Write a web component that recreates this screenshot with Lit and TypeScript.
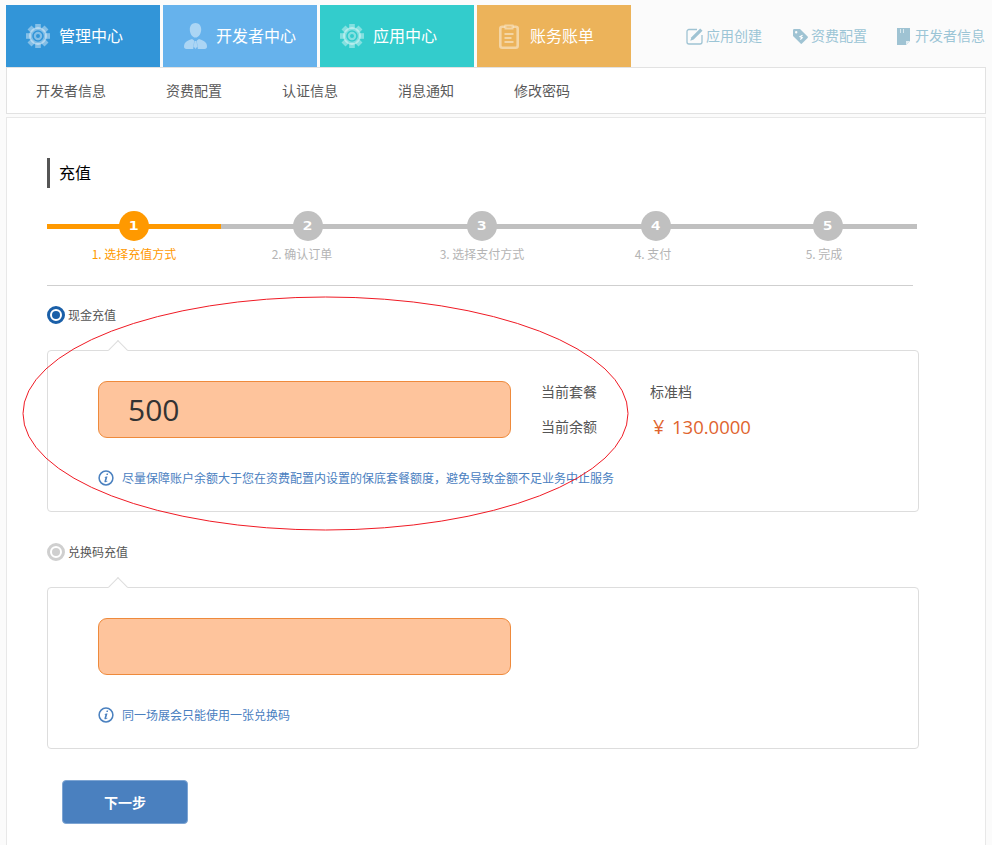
import { LitElement, html, css, svg } from "lit";
import { customElement } from "lit/decorators.js";

const gear = () => html`
  <svg class="tab-icon" width="24" height="24" viewBox="-12 -12 24 24">
    ${[0, 45, 90, 135, 180, 225, 270, 315].map(
      (a) => svg`<rect x="-2.8" y="-12" width="5.6" height="5" transform="rotate(${a})" fill="#fff" fill-opacity=".4" />`
    )}
    <path
      fill="#fff"
      fill-opacity=".4"
      fill-rule="evenodd"
      d="M-9 0a9 9 0 1 0 18 0a9 9 0 1 0-18 0zM-5.800 0a5.800 5.800 0 1 0 11.600 0a5.800 5.800 0 1 0-11.600 0zM-4.200 0a4.200 4.200 0 1 0 8.400 0a4.200 4.200 0 1 0-8.400 0zM-2 0a2 2 0 1 0 4 0a2 2 0 1 0-4 0z"
    />
  </svg>
`;

const person = html`
  <svg class="tab-icon" width="23" height="27" viewBox="0 0 23 27">
    <g fill="#fff" fill-opacity=".45">
      <path d="M11.500 0c3.600 0 5.700 2.800 5.700 6.400 0 3.600-2.200 8.100-5.700 8.100s-5.700-4.500-5.700-8.100C5.800 2.800 7.900 0 11.500 0z" />
      <path d="M8 16l2.200 1.500-1 8.500H2.500C.8 26 0 25 0 23.500c0-3.500 2-5.500 8-7.500z" />
      <path d="M15 16l-2.200 1.500 1 8.500h6.700c1.700 0 2.500-1 2.500-2.500 0-3.500-2-5.500-8-7.500z" />
      <path d="M10.500 18h2l.8 5.500-1.800 2.500-1.800-2.500z" />
    </g>
  </svg>
`;

const clipboard = html`
  <svg class="tab-icon" width="20" height="26" viewBox="0 0 20 26">
    <g fill="none" stroke="#fff" stroke-opacity=".45" stroke-width="2.600">
      <path d="M6 3.800H3.300a2 2 0 0 0-2 2V22.700a2 2 0 0 0 2 2h13.400a2 2 0 0 0 2-2V5.800a2 2 0 0 0-2-2H14" />
      <path d="M6.500 5.500V2.500h7v3z" stroke-width="2" />
      <path d="M5.500 11h9M5.500 15h7M5.500 19h9" stroke-width="2" />
    </g>
  </svg>
`;

const pencil = html`
  <svg width="17" height="17" viewBox="0 0 17 17">
    <path d="M11 1.500H3A2 2 0 0 0 1 3.500v10.500a2 2 0 0 0 2 2h11a2 2 0 0 0 2-2V7" fill="none" stroke="#9fc3d3" stroke-width="1.300" />
    <path d="M14.200.5l2.300 2.300-8.800 8.800-3.400 1.100 1.100-3.400z" fill="#9fc3d3" />
  </svg>
`;

const tag = html`
  <svg width="15" height="15" viewBox="0 0 15 15">
    <path fill-rule="evenodd" fill="#9fc3d3" d="M0 1.200A1.200 1.200 0 0 1 1.200 0H7l7.600 7.600a1 1 0 0 1 0 1.400l-5.600 5.600a1 1 0 0 1-1.400 0L0 7zM3.200 2a1.200 1.200 0 1 0 0 2.400 1.200 1.200 0 0 0 0-2.400z" />
    <path d="M9.500 6.200L7 7.700l2.300 1-2 1.800" fill="none" stroke="#fff" stroke-width="1.100" />
  </svg>
`;

const book = html`
  <svg width="13" height="17" viewBox="0 0 13 17">
    <path d="M0 0h13v13l-4 4H0z" fill="#9fc3d3" />
    <path d="M9 17v-4h4z" fill="#e2eef3" />
    <path d="M3 1v4h1V1zM6 1v4h1V1z" fill="#d8e8ee" />
  </svg>
`;

const info = html`
  <svg class="info-icon" width="16" height="16" viewBox="0 0 16 16">
    <circle cx="8" cy="8" r="6.900" fill="none" stroke="#4a80bf" stroke-width="1.500" />
    <path d="M8.700 3.600h1.500l-.4 1.500H8.300zM7.800 6.400h1.700l-1.300 4.500c-.1.400.3.500 1.100-.1l.2.400c-1 .9-1.700 1.200-2.400 1.100-.7-.1-.8-.6-.6-1.300l.9-3.300-.8.200.1-.4z" fill="#4a80bf" />
  </svg>
`;

const tabs = [
  { label: "管理中心", color: "#3295d8", icon: gear() },
  { label: "开发者中心", color: "#66b2ec", icon: person },
  { label: "应用中心", color: "#33cccc", icon: gear() },
  { label: "账务账单", color: "#ecb35a", icon: clipboard },
];

const links = [
  { label: "应用创建", icon: pencil },
  { label: "资费配置", icon: tag },
  { label: "开发者信息", icon: book },
];

const subnav = ["开发者信息", "资费配置", "认证信息", "消息通知", "修改密码"];

// labelNudge: the reference labels sit a few px left of their circle
const steps = [
  { label: "选择充值方式", labelNudge: 0, circleNudge: 0 },
  { label: "确认订单", labelNudge: 6, circleNudge: 0 },
  { label: "选择支付方式", labelNudge: 0, circleNudge: 0 },
  { label: "支付", labelNudge: 3, circleNudge: 0 },
  { label: "完成", labelNudge: 6, circleNudge: 2 },
];

@customElement("app-root")
export class AppRoot extends LitElement {
  static styles = css`
    :host {
      display: block;
      position: relative;
      height: 845px;
      overflow: hidden;
      background: #fbfbfb;
      font-family: "Noto Sans CJK SC", "Liberation Sans", sans-serif;
      color: #555;
    }
    .topbar {
      display: flex;
      justify-content: space-between;
      align-items: center;
      margin: 0 6px;
      padding-top: 5px;
    }
    .tabs {
      display: flex;
      gap: 3px;
    }
    .tab {
      width: 154px;
      height: 62px;
      box-sizing: border-box;
      padding-left: 20px;
      display: flex;
      align-items: center;
      gap: 9px;
      color: #fff;
      font-size: 16px;
    }
    .tab:nth-child(2) {
      padding-left: 21px;
    }
    .tab:nth-child(4) {
      padding-left: 22px;
      gap: 11px;
    }
    .tab span,
    .links span,
    .subnav span,
    .radio span.text,
    .note span,
    .facts span {
      margin-top: -2px;
    }
    .links {
      display: flex;
      margin-right: 1px;
      color: #9cc5d6;
      font-size: 14px;
    }
    .links a {
      display: flex;
      align-items: center;
      gap: 3px;
      margin-left: 31px;
    }
    .links a:last-child {
      gap: 5px;
      margin-left: 30px;
    }
    .subnav {
      margin: 0 6px;
      height: 47px;
      box-sizing: border-box;
      border: 1px solid #e2e2e2;
      background: #fff;
      padding-left: 29px;
      display: flex;
      align-items: center;
      gap: 60px;
      font-size: 14px;
      color: #5a5a5a;
    }
    .main {
      margin: 3px 6px 0;
      border: 1px solid #e8e8e8;
      background: #fff;
      padding: 40px 0 60px 40px;
    }
    .title {
      height: 30px;
      line-height: 28px;
      border-left: 3px solid #555;
      padding-left: 9px;
      font-size: 16px;
      color: #000;
    }
    .steps {
      display: flex;
      width: 870px;
      margin-top: 23px;
    }
    .step {
      width: 174px;
      text-align: center;
      font-size: 12px;
      color: #b4b4b4;
    }
    .rail {
      height: 30px;
      display: flex;
      justify-content: center;
      background: linear-gradient(#c0c0c0, #c0c0c0) 0 13px / 100% 5px no-repeat;
    }
    .num {
      width: 30px;
      height: 30px;
      border-radius: 50%;
      background: #c0c0c0;
      color: #fff;
      font: bold 12px/30px "DejaVu Sans Mono", monospace;
    }
    .num span {
      display: inline-block;
      transform: scale(1.35, 1);
    }
    .step.on {
      color: #ff9900;
    }
    .step.on .rail {
      background-image: linear-gradient(#ff9900, #ff9900);
    }
    .step.on .num {
      background: #ff9900;
    }
    .step-label {
      margin-top: 4px;
      line-height: 17px;
    }
    .rule {
      width: 866px;
      height: 1px;
      background: #cfcfcf;
      margin-top: 23px;
    }
    .radio {
      display: flex;
      align-items: center;
      gap: 3px;
      height: 18px;
      margin-top: 20px;
      font-size: 12px;
      color: #555;
    }
    .radio.second {
      margin-top: 31px;
    }
    .dot {
      width: 18px;
      height: 18px;
      box-sizing: border-box;
      border-radius: 50%;
      border: 3px solid #1a5fa8;
      display: flex;
      align-items: center;
      justify-content: center;
    }
    .dot::after {
      content: "";
      width: 8px;
      height: 8px;
      border-radius: 50%;
      background: #1a5fa8;
    }
    .radio.second .dot {
      border-color: #cfcfcf;
    }
    .radio.second .dot::after {
      background: #cfcfcf;
    }
    .panel {
      position: relative;
      width: 872px;
      height: 162px;
      box-sizing: border-box;
      margin-top: 26px;
      border: 1px solid #dddddd;
      border-radius: 4px;
      background: #fff;
      padding: 30px 0 0 50px;
    }
    .panel::before {
      content: "";
      position: absolute;
      left: 63px;
      top: -8px;
      width: 14px;
      height: 14px;
      box-sizing: border-box;
      background: #fff;
      border-top: 1px solid #dddddd;
      border-left: 1px solid #dddddd;
      transform: rotate(45deg);
    }
    .row {
      display: flex;
      align-items: center;
      gap: 30px;
      height: 57px;
    }
    .amount {
      width: 413px;
      height: 57px;
      box-sizing: border-box;
      border: 1px solid #ee8a3c;
      border-radius: 9px;
      background: #fec49c;
      padding-left: 29px;
      font: 30px/55px "Open Sans", sans-serif;
      color: #333;
    }
    .facts {
      display: grid;
      grid-template-columns: 109px auto;
      grid-auto-rows: 35px;
      align-items: center;
      font-size: 14px;
      color: #555;
    }
    .balance {
      display: flex;
      align-items: center;
      margin-left: 3px;
      font: 18.5px "Open Sans", "Noto Sans CJK SC", sans-serif;
      color: #e0642e;
    }
    .balance b {
      width: 19px;
      font-weight: normal;
      font-size: 20px;
    }
    .note {
      display: flex;
      align-items: center;
      gap: 8px;
      margin-top: 32px;
      height: 16px;
      font-size: 12px;
      color: #4a80bf;
    }
    .next {
      width: 126px;
      height: 44px;
      margin: 31px 0 0 15px;
      display: block;
      border: 1px solid #7ea5d3;
      border-radius: 4px;
      background: #4a80bf;
      color: #fff;
      font: bold 14px "Noto Sans CJK SC", sans-serif;
    }
    .ellipse {
      position: absolute;
      left: 22px;
      top: 296px;
      pointer-events: none;
    }
  `;

  render() {
    return html`
      <div class="topbar">
        <div class="tabs">
          ${tabs.map(
            (t) => html`
              <div class="tab" style="background:${t.color}">${t.icon}<span>${t.label}</span></div>
            `
          )}
        </div>
        <div class="links">
          ${links.map((l) => html`<a>${l.icon}<span>${l.label}</span></a>`)}
        </div>
      </div>
      <nav class="subnav">${subnav.map((s) => html`<span>${s}</span>`)}</nav>
      <section class="main">
        <div class="title">充值</div>
        <div class="steps">
          ${steps.map(
            (s, i) => html`
              <div class="step ${i === 0 ? "on" : ""}">
                <div class="rail">
                  <div class="num" style="margin-right:${s.circleNudge * 2}px"><span>${i + 1}</span></div>
                </div>
                <div class="step-label" style="padding-right:${s.labelNudge * 2}px">${i + 1}. ${s.label}</div>
              </div>
            `
          )}
        </div>
        <div class="rule"></div>

        <div class="radio"><span class="dot"></span><span class="text">现金充值</span></div>
        <div class="panel">
          <div class="row">
            <div class="amount">500</div>
            <div class="facts">
              <span>当前套餐</span><span>标准档</span>
              <span>当前余额</span><span class="balance"><b>¥</b>130.0000</span>
            </div>
          </div>
          <div class="note">${info}<span>尽量保障账户余额大于您在资费配置内设置的保底套餐额度，避免导致金额不足业务中止服务</span></div>
        </div>

        <div class="radio second"><span class="dot"></span><span class="text">兑换码充值</span></div>
        <div class="panel">
          <div class="row"><div class="amount"></div></div>
          <div class="note">${info}<span>同一场展会只能使用一张兑换码</span></div>
        </div>

        <button class="next">下一步</button>
      </section>
      <svg class="ellipse" width="608" height="236" viewBox="0 0 608 236">
        <ellipse cx="303.500" cy="117.500" rx="302.500" ry="116.500" fill="none" stroke="#f01a24" stroke-width="1" />
      </svg>
    `;
  }
}
